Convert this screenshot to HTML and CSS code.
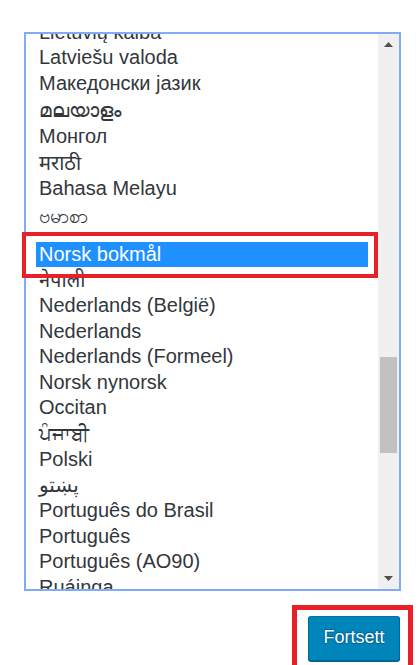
FILE: index.html
```html
<!DOCTYPE html>
<html lang="nb">
<head>
<meta charset="utf-8">
<title>Språk</title>
<link rel="stylesheet" href="styles.css">
</head>
<body>
<div class="page">
  <div class="listbox">
    <div class="viewport">
      <ul class="options">
        <li class="opt">Lietuvių kalba</li>
        <li class="opt">Latviešu valoda</li>
        <li class="opt">Македонски јазик</li>
        <li class="opt h28" lang="ml">മലയാളം</li>
        <li class="opt">Монгол</li>
        <li class="opt h265" lang="mr">मराठी</li>
        <li class="opt">Bahasa Melayu</li>
        <li class="opt my" lang="my">ဗမာစာ</li>
        <li class="opt selected">Norsk bokmål</li>
        <li class="opt h2575" lang="ne">नेपाली</li>
        <li class="opt">Nederlands (België)</li>
        <li class="opt">Nederlands</li>
        <li class="opt">Nederlands (Formeel)</li>
        <li class="opt">Norsk nynorsk</li>
        <li class="opt">Occitan</li>
        <li class="opt h265" lang="pa">ਪੰਜਾਬੀ</li>
        <li class="opt">Polski</li>
        <li class="opt" lang="ps">پښتو</li>
        <li class="opt">Português do Brasil</li>
        <li class="opt">Português</li>
        <li class="opt">Português (AO90)</li>
        <li class="opt">Ruáinga</li>
      </ul>
    </div>
    <div class="scrollbar">
      <div class="sb-btn">
        <svg width="9" height="5" viewBox="0 0 9 5"><polygon points="0,5 9,5 4.5,0" fill="#505050"/></svg>
      </div>
      <div class="sb-track">
        <div class="sb-thumb"></div>
      </div>
      <div class="sb-btn">
        <svg width="9" height="5" viewBox="0 0 9 5"><polygon points="0,0 9,0 4.5,5" fill="#505050"/></svg>
      </div>
    </div>
    <div class="mark mark-option"></div>
  </div>
  <div class="actions">
    <div class="btn-wrap">
      <button class="btn-primary" type="button">Fortsett</button>
      <div class="mark mark-button"></div>
    </div>
  </div>
</div>
</body>
</html>
```
FILE: styles.css
```css
* { box-sizing: border-box; }
html, body {
  margin: 0;
  padding: 0;
  background: #ffffff;
  overflow: hidden;
}
body {
  font-family: "Liberation Sans", "Noto Sans", "DejaVu Sans", sans-serif;
  color: #32373c;
}
.page {
  padding: 32px 0 0 24px;
  width: 418px;
  height: 665px;
}
.listbox {
  position: relative;
  width: 377px;
  height: 559px;
  border: 2px solid #80acf4;
  display: flex;
  background: #fff;
}
.viewport {
  flex: 1;
  overflow: hidden;
  padding: 0 10px;
}
.options {
  list-style: none;
  margin: -14.5px 0 0 0;
  padding: 0;
}
.opt {
  height: 25.5px;
  line-height: 25.5px;
  font-size: 20px;
  padding-left: 3px;
  white-space: nowrap;
}
.opt.h28 { height: 28px; line-height: 28px; }
.opt.h265 { height: 26.5px; line-height: 26.5px; }
.opt.h2575 { height: 25.75px; line-height: 25.75px; }
.opt.my { height: 40.5px; line-height: 28px; }
.opt.selected {
  background: #1e90ff;
  color: #ffffff;
  height: 24.75px;
  line-height: 24.75px;
  margin-bottom: 0.75px;
}
.scrollbar {
  width: 21px;
  background: #f0f0f0;
  display: flex;
  flex-direction: column;
}
.sb-btn {
  height: 21px;
  display: flex;
  align-items: center;
  justify-content: center;
}
.sb-track {
  flex: 1;
  padding: 0 2px;
}
.sb-thumb {
  margin-top: 302px;
  height: 96px;
  background: #c1c1c1;
}
.mark {
  position: absolute;
  border-style: solid;
  border-color: #e8202a;
  pointer-events: none;
}
.mark-option {
  left: -4px;
  top: 198px;
  width: 356px;
  height: 46px;
  border-width: 4px;
}
.actions {
  display: flex;
  justify-content: flex-end;
  width: 376px;
  margin-top: 25px;
}
.btn-wrap {
  position: relative;
}
.btn-primary {
  display: block;
  width: 92px;
  height: 45px;
  margin: 0;
  padding: 0 0 2px;
  font-family: "Liberation Sans", "Noto Sans", sans-serif;
  font-size: 18px;
  color: #ffffff;
  background: #0085ba;
  border: 1px solid #006799;
  border-color: #0073aa #006799 #006799;
  border-radius: 3px;
  box-shadow: 0 1px 0 #006799;
  text-shadow: 0 -1px 1px #006799, 1px 0 1px #006799, 0 1px 1px #006799, -1px 0 1px #006799;
}
.mark-button {
  left: -16px;
  top: -11px;
  width: 121px;
  height: 70px;
  border-width: 5px;
}
```
